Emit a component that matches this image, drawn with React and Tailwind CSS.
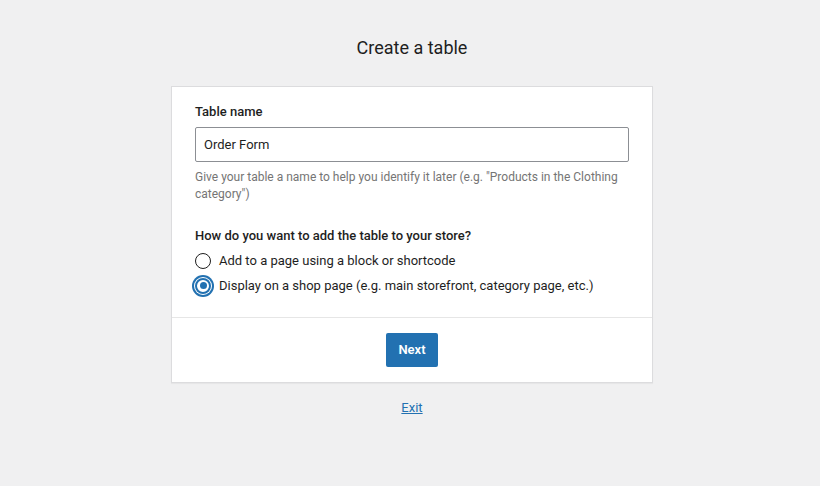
import { useState } from 'react';

const font = { fontFamily: 'Roboto, "Liberation Sans", sans-serif' };

function Radio({ checked, label, onChange }) {
  return (
    <label className="flex items-center gap-[8px] cursor-pointer h-[25px]">
      {checked ? (
        <span className="w-[16px] h-[16px] rounded-full border-[2px] border-[#2271b1] bg-white flex items-center justify-center ring-[2px] ring-[#2271b1] ring-offset-[1px]">
          <span className="w-[7px] h-[7px] rounded-full bg-[#2271b1]" />
        </span>
      ) : (
        <span className="w-[16px] h-[16px] rounded-full border border-[#1e1e1e] bg-white" />
      )}
      <input type="radio" className="hidden" checked={checked} onChange={onChange} />
      <span className="text-[13px] text-[#1e1e1e]">{label}</span>
    </label>
  );
}

export default function App() {
  const [name, setName] = useState('Order Form');
  const [mode, setMode] = useState('shop');

  return (
    <div className="min-h-[486px] bg-[#f0f0f1] flex flex-col items-center pl-[4px]" style={font}>
      <h1 className="mt-[37px] text-[18px] leading-[22px] text-[#1e1e1e]">Create a table</h1>

      <div className="mt-[27px] w-[482px] bg-white border border-[#dcdcde] shadow-[0_1px_1px_rgba(0,0,0,0.04)]">
        <div className="px-[23px] pt-[16px] pb-[19px]">
          <div className="text-[13px] font-medium text-[#1e1e1e] leading-[18px]">Table name</div>
          <input
            value={name}
            onChange={(e) => setName(e.target.value)}
            className="mt-[6px] w-full h-[35px] px-[8px] border border-[#8c8f94] rounded-[2px] text-[13px] text-[#1e1e1e] outline-none"
          />
          <p className="mt-[7px] text-[12px] leading-[17px] text-[#757575]">
            Give your table a name to help you identify it later (e.g. "Products in the Clothing category")
          </p>

          <div className="mt-[24px] text-[13px] font-medium text-[#1e1e1e] leading-[18px]">
            How do you want to add the table to your store?
          </div>
          <div className="mt-[3px] flex flex-col">
            <Radio checked={mode === 'block'} onChange={() => setMode('block')} label="Add to a page using a block or shortcode" />
            <Radio checked={mode === 'shop'} onChange={() => setMode('shop')} label="Display on a shop page (e.g. main storefront, category page, etc.)" />
          </div>
        </div>

        <div className="border-t border-[#e6e6e6] flex justify-center py-[15px]">
          <button className="h-[34px] px-[12px] bg-[#2271b1] text-white text-[13px] font-semibold rounded-[2px]">
            Next
          </button>
        </div>
      </div>

      <a href="#" className="mt-[15px] text-[13px] text-[#2271b1] underline">Exit</a>
    </div>
  );
}
